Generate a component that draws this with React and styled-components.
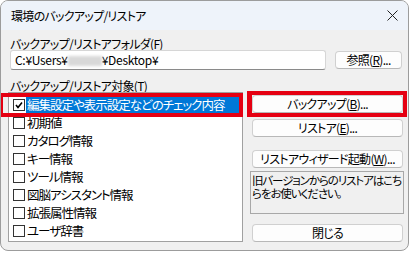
import React from "react";
import styled, { createGlobalStyle } from "styled-components";

const GlobalStyle = createGlobalStyle`
  body {
    margin: 0;
    background: #ffffff;
  }
`;

const Window = styled.div`
  box-sizing: border-box;
  width: 409px;
  height: 251px;
  border: 1px solid #9c9c9c;
  border-radius: 8px;
  background: #f0f0f0;
  overflow: hidden;
  font-family: "Noto Sans CJK JP", sans-serif;
  font-feature-settings: "palt";
  font-size: 12px;
  letter-spacing: -0.7px;
  color: #000;
`;

const TitleBar = styled.div`
  height: 29px;
  display: flex;
  align-items: center;
  justify-content: space-between;
  padding: 0 10px 0 10px;
  background: #eef3fa;
`;

const Body = styled.div`
  padding: 0 5px 0 7px;
`;

const Label = styled.div`
  height: 12px;
  line-height: 12px;
  margin: ${(p) => p.$top}px 0 0 2px;
`;

const FolderRow = styled.div`
  display: flex;
  align-items: center;
  height: 20px;
  margin-left: 2px;
`;

const TextInput = styled.div`
  box-sizing: border-box;
  width: 316px;
  height: 20px;
  padding: 0 4px;
  line-height: 18px;
  letter-spacing: -0.3px;
  background: #fff;
  border: 1px solid #d6d6d6;
  border-bottom-color: #8a8a8a;
  border-radius: 3px;
`;

const Blur = styled.span`
  display: inline-block;
  width: 34px;
  height: 10px;
  vertical-align: -1px;
  background: #d8d8d8;
  filter: blur(1.5px);
`;

const Button = styled.div`
  position: relative;
  box-sizing: border-box;
  width: ${(p) => (p.$w ? `${p.$w}px` : "100%")};
  height: 18px;
  margin-left: ${(p) => p.$ml || 0}px;
  margin-top: ${(p) => p.$mt || 0}px;
  line-height: 16px;
  text-align: center;
  background: #fdfdfd;
  border: 1px solid #d0d0d0;
  border-bottom-color: #b8b8b8;
  border-radius: 4px;

  ${(p) =>
    p.$marked &&
    `
    &::after {
      content: "";
      position: absolute;
      left: -6px;
      right: -5px;
      top: -5px;
      bottom: -5px;
      border: 4px solid #e50012;
      border-left-width: 5px;
      pointer-events: none;
    }
  `}
`;

const Main = styled.div`
  display: flex;
  align-items: flex-start;
`;

const List = styled.div`
  box-sizing: border-box;
  width: 235px;
  height: 150px;
  padding-top: 3px;
  background: #fff;
  border: 1px solid #a0a0a0;
`;

const Row = styled.div`
  position: relative;
  display: flex;
  align-items: center;
  height: 18px;
  padding-left: 4px;

  ${(p) =>
    p.$marked &&
    `
    &::after {
      content: "";
      position: absolute;
      left: -10px;
      right: -1px;
      top: -3px;
      bottom: -3px;
      border: 4px solid #e50012;
      pointer-events: none;
    }
  `}
`;

const Check = styled.span`
  box-sizing: border-box;
  width: 12px;
  height: 12px;
  margin-right: 1px;
  border: 1px solid #333;
  background: #fff;
  display: flex;
  align-items: center;
  justify-content: center;
`;

const ItemText = styled.span`
  flex: 1;
  height: 16px;
  line-height: 16px;
  padding-left: 1px;
  font-size: 12.5px;
  letter-spacing: -1px;
  white-space: nowrap;
  color: ${(p) => (p.$selected ? "#fff" : "#000")};
  background: ${(p) => (p.$selected ? "#0078d7" : "transparent")};
`;

const Side = styled.div`
  width: 151px;
  margin-left: 9px;
  padding-top: 3px;
`;

const Note = styled.div`
  box-sizing: border-box;
  width: 154px;
  height: 43px;
  margin: 3px 0 0 -2px;
  padding: 2px 1px;
  font-size: 11.5px;
  letter-spacing: -1.1px;
  line-height: 13px;
  white-space: nowrap;
  background: #f0f0f0;
  border: 1px solid #a8a8a8;
`;

const items = [
  "編集設定や表示設定などのチェック内容",
  "初期値",
  "カタログ情報",
  "キー情報",
  "ツール情報",
  "図脳アシスタント情報",
  "拡張属性情報",
  "ユーザ辞書",
];

export default function App() {
  return (
    <>
      <GlobalStyle />
      <Window>
        <TitleBar>
          <span>環境のバックアップ/リストア</span>
          <svg width="11" height="11" viewBox="0 0 11 11">
            <path d="M0.5 0.5 L10.5 10.5 M10.5 0.5 L0.5 10.5" stroke="#222" strokeWidth="1" />
          </svg>
        </TitleBar>
        <Body>
          <Label $top={8}>
            バックアップ/リストアフォルダ(<u>F</u>)
          </Label>
          <FolderRow>
            <TextInput>
              C:¥Users¥<Blur />¥Desktop¥
            </TextInput>
            <Button $w={67} $ml={9}>
              参照(<u>R</u>)...
            </Button>
          </FolderRow>
          <Label $top={10}>
            バックアップ/リストア対象(<u>T</u>)
          </Label>
          <Main>
            <List>
              {items.map((text, i) => (
                <Row key={text} $marked={i === 0}>
                  <Check>
                    {i === 0 && (
                      <svg width="8" height="8" viewBox="0 0 8 8">
                        <path d="M1 4 L3 6.5 L7 1.5" stroke="#000" strokeWidth="1.6" fill="none" />
                      </svg>
                    )}
                  </Check>
                  <ItemText $selected={i === 0}>{text}</ItemText>
                </Row>
              ))}
            </List>
            <Side>
              <Button $marked>
                バックアップ(<u>B</u>)...
              </Button>
              <Button $mt={6}>
                リストア(<u>E</u>)...
              </Button>
              <Button $mt={13}>
                リストアウィザード起動(<u>W</u>)...
              </Button>
              <Note>
                旧バージョンからのリストアはこち
                <br />
                らをお使いください。
              </Note>
              <Button $mt={10}>閉じる</Button>
            </Side>
          </Main>
        </Body>
      </Window>
    </>
  );
}
